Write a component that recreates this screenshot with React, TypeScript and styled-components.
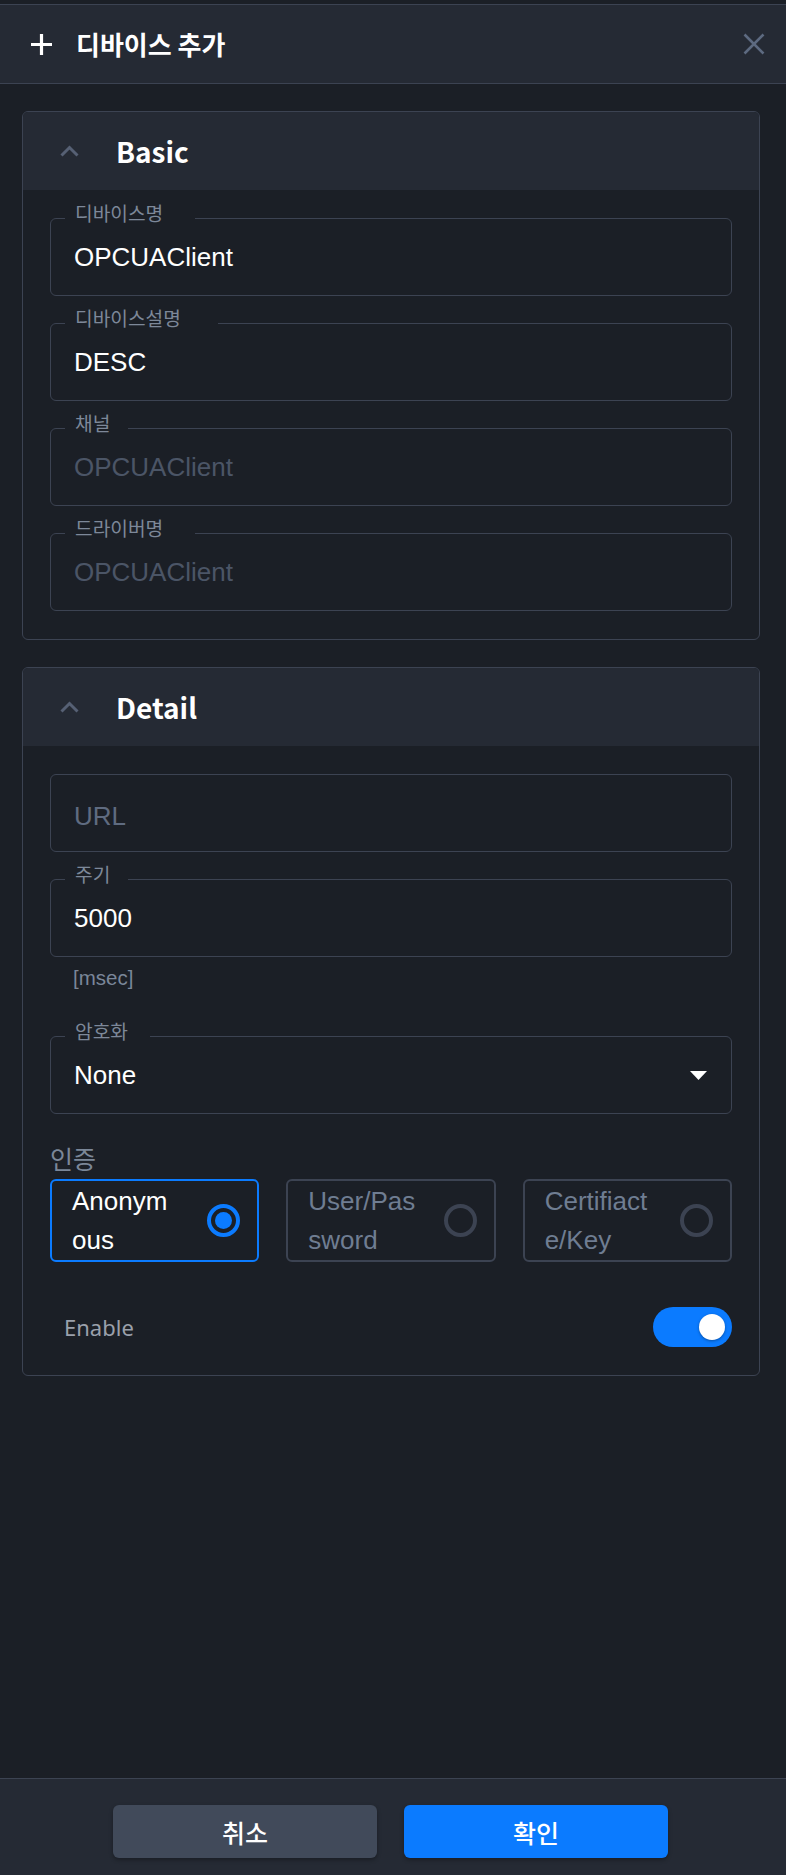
import { createGlobalStyle } from "styled-components";
import styled from "styled-components";

const GlobalStyle = createGlobalStyle`
  html, body {
    margin: 0;
    padding: 0;
    background: #1b1f26;
  }
  body {
    font-family: "Liberation Sans", Arial, "Noto Sans CJK KR", sans-serif;
    color: #fff;
  }
  * { box-sizing: border-box; }
`;

type FieldTone = "value" | "disabled" | "placeholder";

const basicFields: { label: string; value: string; tone: FieldTone }[] = [
  { label: "디바이스명", value: "OPCUAClient", tone: "value" },
  { label: "디바이스설명", value: "DESC", tone: "value" },
  { label: "채널", value: "OPCUAClient", tone: "disabled" },
  { label: "드라이버명", value: "OPCUAClient", tone: "disabled" },
];

const authOptions = [
  { id: "anon", text: "Anonymous", checked: true },
  { id: "user", text: "User/Password", checked: false },
  { id: "cert", text: "Certifiacte/Key", checked: false },
];

function PlusIcon() {
  return (
    <svg width="23" height="23" viewBox="0 0 23 23">
      <path d="M11.5 1v21M1 11.5h21" stroke="#fff" strokeWidth="3.2" />
    </svg>
  );
}

function CloseIcon() {
  return (
    <svg width="22" height="22" viewBox="0 0 22 22">
      <path d="M1.5 1.5l19 19M20.5 1.5l-19 19" stroke="#5d6a80" strokeWidth="2.6" />
    </svg>
  );
}

function ChevronUp() {
  return (
    <svg width="19" height="12" viewBox="0 0 19 12">
      <path d="M1.5 10.5L9.5 2.5l8 8" stroke="#566074" strokeWidth="3" fill="none" />
    </svg>
  );
}

function Caret() {
  return (
    <svg width="17" height="9" viewBox="0 0 17 9">
      <polygon points="0,0 17,0 8.5,9" fill="#fff" />
    </svg>
  );
}

function TextField({ label, value, tone }: { label?: string; value: string; tone: FieldTone }) {
  return (
    <FieldBox $shift={tone === "placeholder" ? 7 : 0}>
      {label && <FloatLabel $chars={label.length}>{label}</FloatLabel>}
      <FieldValue $tone={tone}>{value}</FieldValue>
    </FieldBox>
  );
}

function Section({ title, children }: { title: string; children: React.ReactNode }) {
  return (
    <Card>
      <CardHeader>
        <ChevronUp />
        <CardTitle>{title}</CardTitle>
      </CardHeader>
      <CardBody>{children}</CardBody>
    </Card>
  );
}

export default function App() {
  return (
    <Page>
      <GlobalStyle />
      <Header>
        <HeaderTitle>
          <PlusIcon />
          <span>디바이스 추가</span>
        </HeaderTitle>
        <CloseButton aria-label="close">
          <CloseIcon />
        </CloseButton>
      </Header>

      <Body>
        <Section title="Basic">
          {basicFields.map(f => (
            <TextField key={f.label} label={f.label} value={f.value} tone={f.tone} />
          ))}
        </Section>

        <Section title="Detail">
          <TextField value="URL" tone="placeholder" />
          <div>
            <TextField label="주기" value="5000" tone="value" />
            <Helper>[msec]</Helper>
          </div>
          <FieldBox $shift={0}>
            <FloatLabel $chars={3}>암호화</FloatLabel>
            <FieldValue $tone="value">None</FieldValue>
            <Caret />
          </FieldBox>
          <div>
            <GroupLabel>인증</GroupLabel>
            <OptionGrid>
              {authOptions.map(o => (
                <OptionCard key={o.id} $checked={o.checked}>
                  <OptionText $checked={o.checked}>{o.text}</OptionText>
                  <RadioDot $checked={o.checked} />
                </OptionCard>
              ))}
            </OptionGrid>
          </div>
          <EnableRow>
            <EnableText>Enable</EnableText>
            <Switch aria-checked="true" role="switch">
              <Knob />
            </Switch>
          </EnableRow>
        </Section>
      </Body>

      <Footer>
        <ActionButton $primary={false}>취소</ActionButton>
        <ActionButton $primary>확인</ActionButton>
      </Footer>
    </Page>
  );
}

const Page = styled.div`
  min-height: 100vh;
  display: flex;
  flex-direction: column;
  padding-top: 4px;
`;

const Header = styled.header`
  height: 80px;
  display: flex;
  align-items: center;
  justify-content: space-between;
  padding: 0 21px 0 30px;
  background: #252a34;
  border-top: 1px solid #3c4352;
  border-bottom: 1px solid #3c4352;
`;

const HeaderTitle = styled.h1`
  margin: 0;
  display: flex;
  align-items: center;
  gap: 23px;
  font-family: "Noto Sans CJK KR", sans-serif;
  font-size: 26px;
  font-weight: 700;
  color: #fff;
  line-height: 1;
`;

const CloseButton = styled.button`
  display: flex;
  padding: 0;
  border: 0;
  background: none;
  cursor: pointer;
`;

const Body = styled.main`
  flex: 1;
  display: flex;
  flex-direction: column;
  gap: 27px;
  padding: 27px 26px 27px 22px;
`;

const Card = styled.section`
  border: 1px solid #3c4352;
  border-radius: 6px;
  overflow: hidden;
`;

const CardHeader = styled.div`
  height: 78px;
  display: flex;
  align-items: center;
  gap: 37px;
  padding-left: 37px;
  background: #252a34;
`;

const CardTitle = styled.h2`
  margin: 0;
  font-family: "Noto Sans CJK KR", sans-serif;
  font-size: 28px;
  font-weight: 700;
  color: #fff;
`;

const CardBody = styled.div`
  display: flex;
  flex-direction: column;
  gap: 27px;
  padding: 28px 27px 28px 27px;
`;

const FieldBox = styled.div<{ $shift: number }>`
  position: relative;
  height: 78px;
  display: flex;
  align-items: center;
  justify-content: space-between;
  padding: ${p => p.$shift}px 24px 0 23px;
  border: 1px solid #3c4352;
  border-radius: 6px;
`;

const FloatLabel = styled.span<{ $chars: number }>`
  position: absolute;
  top: -16px;
  left: 14px;
  padding: 0 ${p => 8 + p.$chars * 4.8}px 0 10px;
  background: #1b1f26;
  font-family: "Noto Sans CJK KR", sans-serif;
  font-size: 19.2px;
  line-height: 1.1;
  color: #7d8899;
`;

const toneColor: Record<FieldTone, string> = {
  value: "#ffffff",
  disabled: "#4b5566",
  placeholder: "#5f6b80",
};

const FieldValue = styled.span<{ $tone: FieldTone }>`
  font-size: 26px;
  color: ${p => toneColor[p.$tone]};
`;

const Helper = styled.p`
  margin: 9px 0 19px 23px;
  font-size: 20.5px;
  line-height: 24px;
  color: #7a8699;
`;

const GroupLabel = styled.div`
  font-family: "Noto Sans CJK KR", sans-serif;
  font-size: 25px;
  line-height: 34px;
  color: #7b8798;
  margin-bottom: 4px;
`;

const OptionGrid = styled.div`
  display: grid;
  grid-template-columns: repeat(3, 1fr);
  gap: 27px;
`;

const OptionCard = styled.label<{ $checked: boolean }>`
  height: 83px;
  display: flex;
  align-items: center;
  padding: 0 17px 0 20px;
  border: 2px solid ${p => (p.$checked ? "#0b7bff" : "#3c4352")};
  border-radius: 6px;
  cursor: pointer;
`;

const OptionText = styled.span<{ $checked: boolean }>`
  width: 108px;
  font-size: 26px;
  line-height: 39px;
  word-break: break-all;
  color: ${p => (p.$checked ? "#fff" : "#6f7d92")};
`;

const RadioDot = styled.span<{ $checked: boolean }>`
  margin-left: auto;
  width: 33px;
  height: 33px;
  display: flex;
  align-items: center;
  justify-content: center;
  border-radius: 50%;
  border: 4px solid ${p => (p.$checked ? "#0b7bff" : "#3c4352")};

  &::after {
    content: "";
    width: 17px;
    height: 17px;
    border-radius: 50%;
    background: ${p => (p.$checked ? "#0b7bff" : "transparent")};
  }
`;

const EnableRow = styled.div`
  display: flex;
  align-items: center;
  justify-content: space-between;
  padding: 18px 0 0 14px;
`;

const EnableText = styled.span`
  font-family: "Noto Sans", sans-serif;
  font-size: 22px;
  color: #9aa0ab;
`;

const Switch = styled.button`
  width: 79px;
  height: 40px;
  display: flex;
  align-items: center;
  justify-content: flex-end;
  padding: 0 7px;
  border: 0;
  border-radius: 20px;
  background: #0b7bff;
  cursor: pointer;
`;

const Knob = styled.span`
  width: 26px;
  height: 26px;
  border-radius: 50%;
  background: #fff;
  box-shadow: 0 1px 3px rgba(0, 0, 0, 0.35);
`;

const Footer = styled.footer`
  display: flex;
  justify-content: center;
  gap: 27px;
  padding: 26px 5px 17px 0;
  background: #252a34;
  border-top: 1px solid #3c4352;
`;

const ActionButton = styled.button<{ $primary: boolean }>`
  width: 264px;
  height: 53px;
  border: 0;
  border-radius: 6px;
  background: ${p => (p.$primary ? "#0b7bff" : "#414a5a")};
  box-shadow: 0 2px 4px rgba(0, 0, 0, 0.3);
  font-family: "Noto Sans CJK KR", sans-serif;
  font-size: 25px;
  font-weight: 500;
  color: #fff;
  cursor: pointer;
`;
